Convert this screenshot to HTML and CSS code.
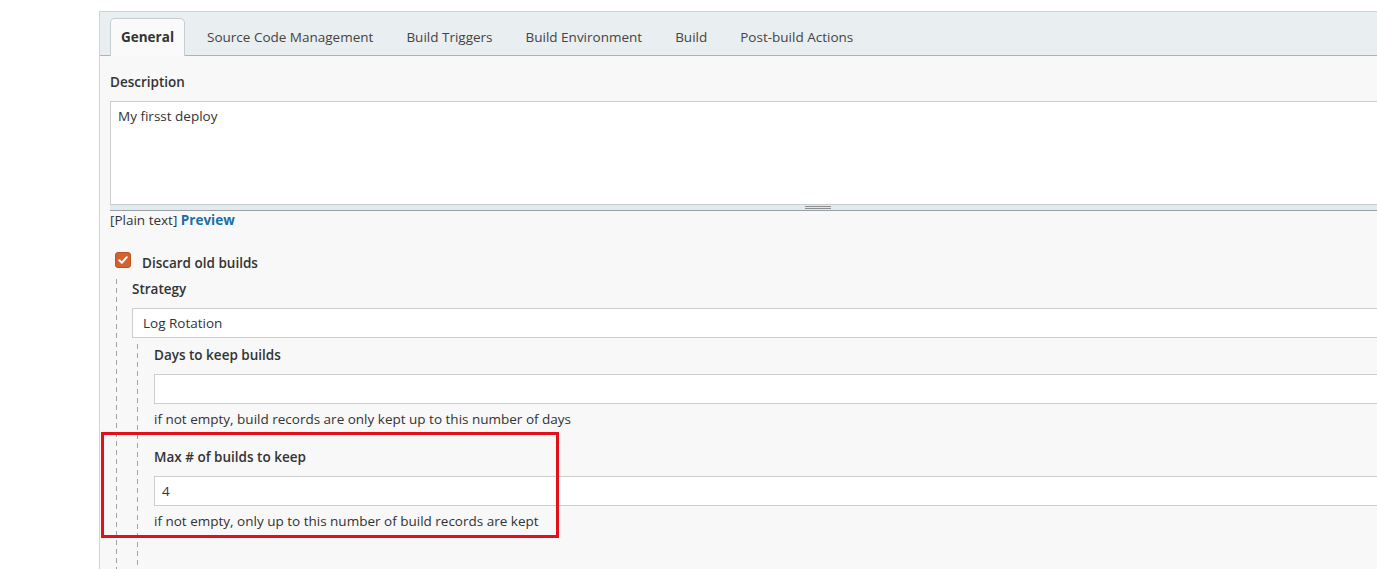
FILE: index.html
```html
<!DOCTYPE html>
<html lang="en">
<head>
<meta charset="utf-8">
<title>Configure</title>
<link rel="stylesheet" href="styles.css">
</head>
<body>
<div class="page">
  <div class="panel">
    <div class="tabbar">
      <div class="tab active">General</div>
      <div class="tab">Source Code Management</div>
      <div class="tab">Build Triggers</div>
      <div class="tab">Build Environment</div>
      <div class="tab">Build</div>
      <div class="tab">Post-build Actions</div>
    </div>
    <div class="content">
      <div class="field-label desc-label">Description</div>
      <div class="textarea-wrap">
        <textarea class="textarea">My firsst deploy</textarea>
        <div class="grip"><span class="grip-lines"></span></div>
      </div>
      <div class="preview-line">[Plain text] <a class="preview-link" href="#">Preview</a></div>
      <div class="check-row">
        <span class="checkbox">
          <svg width="12" height="12" viewBox="0 0 12 12"><path d="M2.3 6.2 L4.9 8.7 L9.8 3.2" fill="none" stroke="#fff" stroke-width="2" stroke-linecap="round" stroke-linejoin="round"/></svg>
        </span>
        <span class="check-label">Discard old builds</span>
      </div>
      <div class="nested nested-outer">
        <div class="field-label">Strategy</div>
        <div class="select">Log Rotation</div>
        <div class="nested nested-inner">
          <div class="field-label days-label">Days to keep builds</div>
          <input class="text-input" type="text" value="">
          <div class="help">if not empty, build records are only kept up to this number of days</div>
          <div class="field-label max-label">Max # of builds to keep</div>
          <input class="text-input" type="text" value="4">
          <div class="help">if not empty, only up to this number of build records are kept</div>
        </div>
      </div>
    </div>
  </div>
  <div class="highlight"></div>
</div>
</body>
</html>
```

FILE: styles.css
```css
html, body {
  margin: 0;
  padding: 0;
  background: #ffffff;
}

body {
  font-family: "Open Sans", "Noto Sans", sans-serif;
  font-size: 13px;
  color: #333333;
  overflow: hidden;
  height: 569px;
}

.page {
  position: relative;
  padding: 11px 0 0 99px;
  height: 558px;
  overflow: hidden;
}

.panel {
  width: 1436px;
  height: 600px;
  background: #f8f8f8;
  border-top: 1px solid #d3d3d3;
  border-left: 1px solid #d3d3d3;
  box-sizing: border-box;
}

.tabbar {
  display: flex;
  gap: 11px;
  background: #e9eef0;
  border-bottom: 1px solid #a9b6b9;
  padding: 6px 10px 0 10px;
  height: 44px;
  box-sizing: border-box;
}

.tab {
  height: 37px;
  line-height: 37px;
  padding: 0 10px;
  border: 1px solid transparent;
  border-bottom: none;
  border-radius: 5px 5px 0 0;
  color: #444;
  font-size: 13.5px;
  box-sizing: border-box;
  white-space: nowrap;
}

.tab.active {
  background: #fafafa;
  border-color: #c6ced1;
  font-weight: 700;
  color: #333;
  height: 38px;
  margin-bottom: -1px;
}

.content {
  padding: 16px 10px 0 10px;
}

.field-label {
  font-weight: 600;
  line-height: 20px;
  font-size: 13.5px;
  color: #333;
}

.desc-label {
  margin-bottom: 9px;
}

.textarea-wrap {
  width: 100%;
}

.textarea {
  display: block;
  width: 100%;
  height: 104px;
  box-sizing: border-box;
  margin: 0;
  padding: 5px 7px;
  border: 1px solid #cdcdcd;
  border-bottom-color: #c5cbcf;
  background: #fff;
  font-family: inherit;
  font-size: 13.5px;
  color: #333;
  resize: none;
  outline: none;
}

.grip {
  height: 5px;
  background: #e4e9ec;
  border-bottom: 1px solid #95a1a9;
  display: flex;
  justify-content: center;
  align-items: center;
}

.grip-lines {
  width: 26px;
  height: 1px;
  border-top: 1px solid #8d8d8d;
  border-bottom: 1px solid #8d8d8d;
}

.preview-line {
  line-height: 19px;
  font-size: 13.5px;
}

.preview-link {
  color: #1a6fa3;
  font-weight: 700;
  text-decoration: none;
}

.check-row {
  display: flex;
  align-items: flex-start;
  margin-top: 22px;
  padding-left: 5px;
}

.checkbox {
  width: 16px;
  height: 16px;
  box-sizing: border-box;
  border-radius: 3px;
  background: #d4622e;
  border: 1px solid #b9521f;
  display: flex;
  align-items: center;
  justify-content: center;
  margin-right: 11px;
}

.check-label {
  font-size: 13.5px;
  line-height: 20px;
  margin-top: 1px;
  font-weight: 600;
}

.nested {
  background-image: repeating-linear-gradient(to bottom, #a3a3a3 0, #a3a3a3 5px, transparent 5px, transparent 9px);
  background-size: 1px 100%;
  background-repeat: no-repeat;
  background-position: 0 0;
}

.nested-outer {
  margin-top: 6px;
  margin-left: 6px;
  padding-left: 16px;
  padding-bottom: 100px;
}

.select {
  margin-top: 9px;
  height: 30px;
  line-height: 28px;
  box-sizing: border-box;
  border: 1px solid #cdcdcd;
  background: #fff;
  padding: 0 10px;
  font-size: 13.5px;
}

.nested-inner {
  margin-top: 6px;
  margin-left: 5px;
  padding-left: 17px;
  padding-top: 1px;
  padding-bottom: 100px;
}

.text-input {
  display: block;
  width: 100%;
  height: 30px;
  box-sizing: border-box;
  margin: 9px 0 0 0;
  border: 1px solid #cdcdcd;
  background: #fff;
  padding: 0 7px;
  font-family: inherit;
  font-size: 13.5px;
  color: #333;
  outline: none;
}

.help {
  margin-top: 5px;
  line-height: 20px;
  font-size: 13.5px;
}

.max-label {
  margin-top: 18px;
}

.highlight {
  position: absolute;
  left: 101px;
  top: 432px;
  width: 458px;
  height: 106px;
  box-sizing: border-box;
  border: 3px solid #e3101a;
  pointer-events: none;
}
```
